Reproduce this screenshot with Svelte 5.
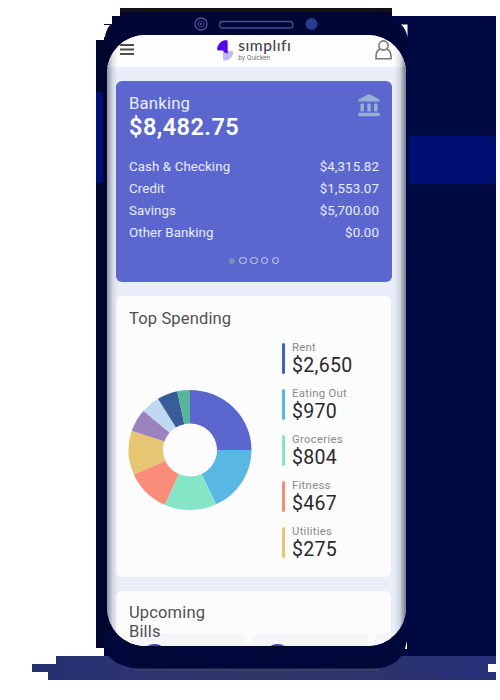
<script>
  const accounts = [
    { name: 'Cash & Checking', amount: '$4,315.82' },
    { name: 'Credit', amount: '$1,553.07' },
    { name: 'Savings', amount: '$5,700.00' },
    { name: 'Other Banking', amount: '$0.00' }
  ];
  const spending = [
    { name: 'Rent', amount: '$2,650', color: '#3d63c4' },
    { name: 'Eating Out', amount: '$970', color: '#59b7e2' },
    { name: 'Groceries', amount: '$804', color: '#82e5c4' },
    { name: 'Fitness', amount: '$467', color: '#f98b77' },
    { name: 'Utilities', amount: '$275', color: '#e8c670' }
  ];
  const slices = [
    [0, 90, '#5b67cf'], [90, 154.8, '#59b7e4'], [154.8, 204.3, '#84e6c6'],
    [204.3, 246, '#f98d79'], [246, 288.7, '#e6c672'], [288.7, 311, '#9d82c0'],
    [311, 328.7, '#bed9f1'], [328.7, 348, '#385d98'], [348, 360, '#57b59c']
  ];
  const pt = (r, deg) => {
    const a = (deg * Math.PI) / 180;
    return `${(r * Math.sin(a)).toFixed(2)} ${(-r * Math.cos(a)).toFixed(2)}`;
  };
  const arc = (a, b) =>
    `M${pt(60, a)}A60 60 0 0 1 ${pt(60, b)}L${pt(26.4, b)}A26.4 26.4 0 0 0 ${pt(26.4, a)}Z`;
</script>

<div class="stage">
  <svg class="backdrop" width="500" height="700" viewBox="0 0 500 700">
    <defs>
      <linearGradient id="floor" x1="0" x2="1" y1="0" y2="0">
        <stop offset="0" stop-color="#26306f" />
        <stop offset=".2" stop-color="#2b3373" />
        <stop offset=".5" stop-color="#303767" />
        <stop offset=".8" stop-color="#2b3270" />
        <stop offset="1" stop-color="#28307b" />
      </linearGradient>
    </defs>
    <path fill="#000941" d="M392 16H496V656H392Z" />
    <path fill="#00062f" d="M120 8H392V656H104V648H96V40H104V24H112V16H120Z" />
    <path fill="#111216" d="M120 8H392V12H120Z" />
    <path fill="#001072" d="M96 92H103V183H96Z" />
    <rect x="408.500" y="136" width="87.500" height="48" rx="3" fill="#001072" />
    <path fill="url(#floor)" d="M56 656H496V664H488V672H496V680H48V672H32V664H56Z" />
    <path fill="#3d4261" d="M135 668H380V671H135Z" opacity=".7" />
    <path fill="#00083a" d="M104 630H408V640Q402 668 374 668.500H138Q110 666 104 648Z" />
    <path fill="#000636" d="M148 12H364Q398 12 407 44V80H112V44Q114 12 148 12Z" />
    <path fill="#fff" d="M104 25H110Q106 30 105 37H104ZM401 24.500H407.500V37Q406 29 401 24.500ZM407 641V649H405Z" />
    <g fill="none" stroke="#4c5393">
      <circle cx="201" cy="24" r="6" stroke-width="1.300" />
      <circle cx="201" cy="24" r="3" stroke-width="1.200" stroke="#303a79" />
      <rect x="219.500" y="21.500" width="73.500" height="6.500" rx="3.200" stroke-width="1.300" />
    </g>
    <circle cx="201" cy="24" r="1" fill="#59609c" />
    <circle cx="311.500" cy="24" r="6" fill="#253d92" />
  </svg>

  <main class="screen">
    <header>
      <svg class="menu" width="14" height="11" viewBox="0 0 14 11">
        <path d="M0 1H14M0 5.500H14M0 10H14" stroke="#4c4c4f" stroke-width="1.800" />
      </svg>
      <div class="brand">
        <svg width="17" height="21" viewBox="0 0 17 21">
          <path d="M0 8.500Q2 .5 9 0Q10.700 0 10.700 2V10.500H1.500Q0 10.300 0 8.500Z" fill="#5208ed" />
          <path d="M6 11H15.500Q17 11.500 16.300 13.500Q14 20 7.500 20.700Q6 20.500 6 19Z" fill="#c4b8fb" />
          <path d="M6 10H10.700V13.500Q6.500 13 6 10Z" fill="#5208ed" />
        </svg>
        <div class="wordmark"><b>sımplıfı</b><small>by Quicken</small></div>
      </div>
      <svg class="user" width="17" height="20" viewBox="0 0 17 20" fill="none" stroke="#777779" stroke-width="1.600">
        <circle cx="8.500" cy="5.500" r="4.600" />
        <path d="M5.300 9Q1 11 1 16V18.700H16V16Q16 11 11.700 9" />
      </svg>
    </header>

    <div class="feed">
      <section class="card banking">
        <h2>Banking</h2>
        <p class="total">$8,482.75</p>
        <ul>
          {#each accounts as a}
            <li><span>{a.name}</span><span>{a.amount}</span></li>
          {/each}
        </ul>
        <div class="dots"><i class="on"></i><i></i><i></i><i></i><i></i></div>
        <svg class="bank" width="22" height="23" viewBox="0 0 22 23" fill="#99b0d4">
          <path d="M1 5.200L10 .4Q11 0 12 .4L21 5.200Q21.700 5.600 21.700 7.400H.3Q.3 5.600 1 5.200Z" />
          <rect x="2.500" y="9.500" width="3.400" height="7.900" rx="1" />
          <rect x="9.300" y="9.500" width="3.400" height="7.900" rx="1" />
          <rect x="16.100" y="9.500" width="3.400" height="7.900" rx="1" />
          <rect x=".3" y="18.800" width="21.400" height="3.400" rx=".8" />
        </svg>
      </section>

      <section class="card top">
        <h2>Top Spending</h2>
        <div class="split">
          <svg class="donut" width="124" height="122" viewBox="-62 -61 124 122">
            <g transform="scale(1.025 1)">
              {#each slices as [a, b, c]}
                <path d={arc(a, b)} fill={c} />
              {/each}
            </g>
          </svg>
          <div class="legend">
            {#each spending as s}
              <div class="item" style:--c={s.color}>
                <span>{s.name}</span><strong>{s.amount}</strong>
              </div>
            {/each}
          </div>
        </div>
      </section>

      <section class="card bills">
        <h2>Upcoming<br />Bills</h2>
        <div class="tiles"><div><i></i></div><div><i></i></div><div></div></div>
      </section>
    </div>
  </main>
</div>

<style>
  :global(body) { background: #fff; }
  .stage {
    position: relative;
    width: 500px;
    height: 700px;
    overflow: hidden;
    box-sizing: border-box;
    padding: 35px 0 0 107px;
    font-family: Roboto, Inter, 'Liberation Sans', sans-serif;
  }
  .backdrop { position: absolute; left: 0; top: 0; }
  .screen {
    position: relative;
    width: 299px;
    height: 610.500px;
    border-radius: 38px;
    overflow: hidden;
    background: #e9eef9;
  }
  .screen::after {
    content: '';
    position: absolute;
    inset: 0;
    border-radius: inherit;
    background: linear-gradient(90deg, #0b0d2466, #4448551f 6px, transparent 11px, transparent 287px, #44485528 293px, #0b0d2488);
  }
  header {
    display: flex;
    justify-content: space-between;
    align-items: flex-start;
    height: 32px;
    box-sizing: border-box;
    padding: 4.500px 14px 0 13px;
    background: #fdfdfe;
  }
  .menu { margin-top: 4.500px; }
  .brand { display: flex; gap: 4.500px; margin-left: -2px; }
  .wordmark { display: flex; flex-direction: column; color: #44454d; width: 52px; }
  .wordmark b { font: 500 15.500px/13px Lato, sans-serif; letter-spacing: .55px; white-space: nowrap; height: 13px; margin-top: -1px; }
  .wordmark small { font: 6px/6px Inter, sans-serif; color: #66666d; margin-top: 3px; white-space: nowrap; }
  h2, p, ul { margin: 0; padding: 0; }
  h2 { font-weight: 400; }
  .feed { display: flex; flex-direction: column; gap: 13.500px; padding: 14px 15px 0 9px; }
  .card { border-radius: 6px; background: #fcfcfd; box-sizing: border-box; padding: 0 13px; }
  .banking { position: relative; height: 201px; background: #5b67cf; color: #e9edff; padding-top: 12.500px; margin-right: -1px; }
  .banking h2 { font-size: 16.700px; line-height: 20px; letter-spacing: .2px; }
  .total { font-size: 23.500px; font-weight: 600; line-height: 27px; color: #fff; letter-spacing: .45px; }
  ul { list-style: none; margin-top: 15.500px; }
  li { display: flex; justify-content: space-between; font-size: 13.300px; line-height: 22px; letter-spacing: .1px; }
  .dots { display: flex; justify-content: center; gap: 3.600px; margin-top: 13px; }
  .dots i { width: 7.300px; height: 7.300px; box-sizing: border-box; border: 1.400px solid #cfd7fa; border-radius: 50%; }
  .dots .on { background: #6f92b2; border: 0; width: 6px; height: 6px; margin: .6px 1px 0 0; }
  .bank { position: absolute; right: 12.500px; top: 12.500px; }
  .top { height: 281.500px; padding-top: 13.500px; }
  .top h2, .bills h2 { font-size: 16.500px; line-height: 20px; color: #505052; letter-spacing: .15px; }
  .split { display: flex; gap: 30px; margin-top: 13.500px; }
  .donut { flex: none; margin: 46px 0 0 -1px; }
  .legend { display: flex; flex-direction: column; gap: 15px; }
  .item { position: relative; height: 31px; padding-left: 10px; display: flex; flex-direction: column; }
  .item::before { content: ''; position: absolute; left: 0; top: 0; width: 3px; height: 31px; border-radius: 1.500px; background: var(--c); }
  .item span { font-size: 11.300px; line-height: 9px; color: #88888a; letter-spacing: .3px; }
  .item strong { font-size: 19.500px; font-weight: 400; line-height: 25px; margin-top: 1.500px; color: #29292b; letter-spacing: .3px; }
  .bills { height: 110px; padding-top: 12px; overflow: hidden; }
  .bills h2 { position: relative; line-height: 19px; }
  .tiles { display: flex; gap: 7px; margin: -8px -13px 0 0; overflow: hidden; }
  .tiles div { width: 116px; height: 40px; border-radius: 5px; background: #f5f6f8; flex: none; }
  .tiles div:last-child { width: 19px; }
  .tiles i { display: block; width: 25px; height: 24px; margin: 11px 0 0 13px; border-radius: 12px; background: #3d45ad; }
</style>
